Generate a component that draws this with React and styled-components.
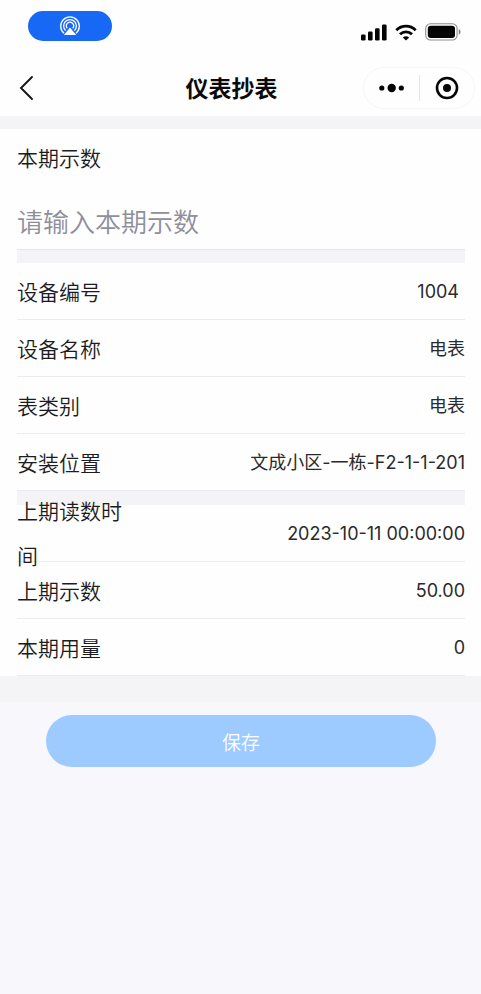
import React, { useState } from "react";
import styled, { createGlobalStyle } from "styled-components";

const GlobalStyle = createGlobalStyle`
  *, *::before, *::after { box-sizing: border-box; }
  body {
    margin: 0;
    background: #f8f7fc;
    color: #1c1c1f;
    font-family: Inter, "Noto Sans CJK SC", sans-serif;
  }
`;

const Page = styled.div`
  min-height: 100vh;
  background: #f8f7fc;
`;

const Header = styled.header`
  background: #fefefe;
`;

const StatusBar = styled.div`
  display: flex;
  align-items: center;
  justify-content: space-between;
  height: 60px;
  padding: 0 20px 8px 28px;
`;

const CastPill = styled.div`
  display: flex;
  align-items: center;
  justify-content: center;
  width: 84px;
  height: 30px;
  border-radius: 15px;
  background: #1868f6;
`;

const StatusIcons = styled.div`
  display: flex;
  align-items: center;
  gap: 8px;
  padding-top: 12px;
`;

const NavBar = styled.nav`
  display: grid;
  grid-template-columns: 1fr auto 1fr;
  align-items: center;
  height: 56px;
  padding: 0 6px 0 16px;
`;

const BackButton = styled.button`
  display: flex;
  justify-self: start;
  padding: 0;
  border: 0;
  background: none;
`;

const Title = styled.h1`
  margin: 0;
  padding: 2px 28px 0 0;
  font-size: 23px;
  line-height: 32px;
  font-weight: 600;
  color: #0a0a0a;
`;

const Capsule = styled.div`
  display: flex;
  justify-self: end;
  align-items: center;
  width: 112px;
  height: 42px;
  border: 1px solid #f6f6f6;
  border-radius: 21px;
`;

const CapsuleButton = styled.button`
  display: flex;
  flex: 1;
  align-items: center;
  justify-content: center;
  height: 26px;
  padding: 0;
  border: 0;
  background: none;

  & + & {
    border-left: 1px solid #e4e4e4;
  }
`;

const Band = styled.div`
  height: ${({ $height }) => $height}px;
  background: #f4f3f6;
`;

const Form = styled.form`
  margin: 0;
`;

const Panel = styled.div`
  padding: 0 16px 0 17px;
  background: #fefefe;
`;

const ReadingField = styled.div`
  display: flex;
  flex-direction: column;
  height: 121px;
  border-bottom: 1px solid #e6e6e9;
`;

const ReadingLabel = styled.label`
  padding-top: 7px;
  font-size: 21px;
  font-weight: 350;
  line-height: 45px;
`;

const ReadingInput = styled.input`
  width: 100%;
  height: 56px;
  margin-top: 13px;
  padding: 2px 0 0;
  border: 0;
  outline: 0;
  background: transparent;
  color: #1c1c1f;
  font: 26px Inter, "Noto Sans CJK SC", sans-serif;
  font-weight: 350;

  &::placeholder {
    color: #8f8e9b;
    opacity: 1;
  }
`;

const Details = styled.dl`
  margin: 0;
`;

const Row = styled.div`
  display: flex;
  align-items: center;
  justify-content: space-between;
  height: 57px;
  padding-top: 2px;
  border-bottom: 1px solid #ececef;
`;

const RowLabel = styled.dt`
  flex: 0 0 120px;
  font-size: 21px;
  font-weight: 350;
  line-height: 45px;
`;

const RowValue = styled.dd`
  margin: 0;
  padding-right: ${({ $inset }) => ($inset ? 6 : 0)}px;
  font-size: 18px;
  font-weight: 400;
  line-height: 28px;
  color: #2a2a2c;
  text-align: right;
`;

const Actions = styled.div`
  padding: 13px 45px 13px 46px;
`;

const SaveButton = styled.button`
  width: 100%;
  height: 52px;
  padding: 0;
  border: 0;
  border-radius: 26px;
  background: #9dcaff;
  color: #fdfeff;
  font: 19px Inter, "Noto Sans CJK SC", sans-serif;
  font-weight: 350;
`;

const deviceRows = [
  { label: "设备编号", value: "1004", inset: true },
  { label: "设备名称", value: "电表" },
  { label: "表类别", value: "电表" },
  { label: "安装位置", value: "文成小区-一栋-F2-1-1-201" },
];

const readingRows = [
  { label: "上期读数时间", value: "2023-10-11 00:00:00" },
  { label: "上期示数", value: "50.00" },
  { label: "本期用量", value: "0" },
];

function CastIcon() {
  return (
    <svg width="22" height="22" viewBox="0 0 22 22" fill="none" stroke="#fff" strokeWidth="1.3" aria-hidden="true">
      <path d="M5 18.2A9.3 9.3 0 1 1 17 18.2" />
      <path d="M6.6 15.6A6.4 6.4 0 1 1 15.4 15.6" />
      <path d="M8.3 13.3A3.6 3.6 0 1 1 13.7 13.3" />
      <path d="M11 12.4L17.2 20H4.8Z" fill="#fff" stroke="none" />
    </svg>
  );
}

function SignalIcon() {
  return (
    <svg width="26" height="17" viewBox="0 0 26 17" fill="#050505" aria-hidden="true">
      <rect x="0" y="10.5" width="4.6" height="6" rx="1.3" />
      <rect x="7" y="7.5" width="4.6" height="9" rx="1.3" />
      <rect x="14" y="4.2" width="4.6" height="12.3" rx="1.3" />
      <rect x="21" y="0.5" width="4.6" height="16" rx="1.3" />
    </svg>
  );
}

function WifiIcon() {
  return (
    <svg width="22" height="17" viewBox="0 0 22 17" fill="none" stroke="#050505" strokeWidth="2.9" aria-hidden="true">
      <path d="M1.3 6.2C6.8 .8 15.2 .8 20.7 6.2" />
      <path d="M5 10.3C8.4 7 13.6 7 17 10.3" />
      <path d="M11 16.6L7.8 13.4C9.6 11.8 12.4 11.8 14.2 13.4Z" fill="#050505" stroke="none" />
    </svg>
  );
}

function BatteryIcon() {
  return (
    <svg width="36" height="18" viewBox="0 0 36 18" aria-hidden="true">
      <rect x=".7" y=".8" width="31.4" height="16.2" rx="4.8" fill="none" stroke="#8d8d8d" strokeWidth="1.1" />
      <rect x="2.8" y="2.8" width="27.2" height="12.2" rx="3" fill="#050505" />
      <path d="M33.8 6.2C36 7 36 10.8 33.8 11.6Z" fill="#777" />
    </svg>
  );
}

function BackIcon() {
  return (
    <svg width="20" height="26" viewBox="0 0 20 26" fill="none" stroke="#151515" strokeWidth="1.9" strokeLinecap="round" aria-hidden="true">
      <path d="M16 2L5 13L16 24" />
    </svg>
  );
}

function MoreIcon() {
  return (
    <svg width="26" height="10" viewBox="0 0 26 10" fill="#050505" aria-hidden="true">
      <circle cx="3.8" cy="5" r="2.6" />
      <circle cx="13.7" cy="5" r="4.2" />
      <circle cx="23.3" cy="5" r="2.6" />
    </svg>
  );
}

function CloseIcon() {
  return (
    <svg width="24" height="24" viewBox="0 0 24 24" fill="none" aria-hidden="true">
      <circle cx="12" cy="12" r="10" stroke="#050505" strokeWidth="2.6" />
      <circle cx="12" cy="12" r="4" fill="#050505" />
    </svg>
  );
}

function DetailList({ rows }) {
  return (
    <Details>
      {rows.map(({ label, value, inset }) => (
        <Row key={label}>
          <RowLabel>{label}</RowLabel>
          <RowValue $inset={inset}>{value}</RowValue>
        </Row>
      ))}
    </Details>
  );
}

export default function App() {
  const [reading, setReading] = useState("");

  return (
    <Page>
      <GlobalStyle />
      <Header>
        <StatusBar>
          <CastPill><CastIcon /></CastPill>
          <StatusIcons>
            <SignalIcon />
            <WifiIcon />
            <BatteryIcon />
          </StatusIcons>
        </StatusBar>
        <NavBar>
          <BackButton type="button" aria-label="返回"><BackIcon /></BackButton>
          <Title>仪表抄表</Title>
          <Capsule>
            <CapsuleButton type="button" aria-label="更多"><MoreIcon /></CapsuleButton>
            <CapsuleButton type="button" aria-label="关闭"><CloseIcon /></CapsuleButton>
          </Capsule>
        </NavBar>
      </Header>
      <Band $height={13} />
      <Form onSubmit={(event) => event.preventDefault()}>
        <Panel>
          <ReadingField>
            <ReadingLabel htmlFor="reading">本期示数</ReadingLabel>
            <ReadingInput
              id="reading"
              inputMode="decimal"
              placeholder="请输入本期示数"
              value={reading}
              onChange={(event) => setReading(event.target.value)}
            />
          </ReadingField>
          <Band $height={13} />
          <DetailList rows={deviceRows} />
          <Band $height={14} />
          <DetailList rows={readingRows} />
        </Panel>
        <Band $height={26} />
        <Actions>
          <SaveButton type="submit">保存</SaveButton>
        </Actions>
      </Form>
    </Page>
  );
}
